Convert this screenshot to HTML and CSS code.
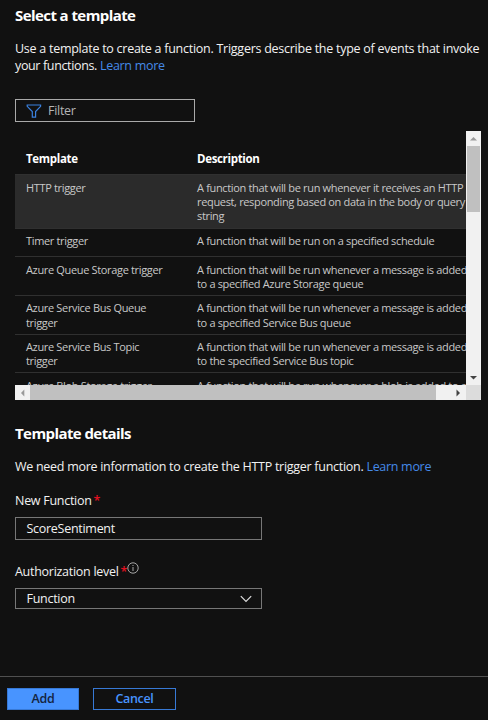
FILE: index.html
```html
<!DOCTYPE html>
<html lang="en">
<head>
<meta charset="utf-8">
<title>New function</title>
<link rel="stylesheet" href="styles.css">
</head>
<body>
<main class="panel">
  <h2 class="heading"><span>Select a template</span></h2>
  <p class="intro">Use a template to create a function. Triggers describe the type of events that invoke<br><span class="tight">your functions.</span> <a class="link">Learn more</a></p>
  <div class="filter">
    <svg class="funnel" viewBox="0 0 16 14" width="16" height="14"><path d="M1.200 1h13.400v1.300L9.600 7.600v5.500H6.300V7.600L1.200 2.300z"/></svg>
    <span>Filter</span>
  </div>
  <section class="grid-box">
    <div class="viewport">
      <div class="row head"><span>Template</span><span>Description</span></div>
      <div class="row tall selected"><span>HTTP trigger</span><span>A function that will be run whenever it receives an HTTP<br>request, responding based on data in the body or query<br>string</span></div>
      <div class="row short"><span>Timer trigger</span><span>A function that will be run on a specified schedule</span></div>
      <div class="row"><span>Azure Queue Storage trigger</span><span>A function that will be run whenever a message is added<br>to a specified Azure Storage queue</span></div>
      <div class="row"><span>Azure Service Bus Queue<br>trigger</span><span>A function that will be run whenever a message is added<br>to a specified Service Bus queue</span></div>
      <div class="row"><span>Azure Service Bus Topic<br>trigger</span><span>A function that will be run whenever a message is added<br>to the specified Service Bus topic</span></div>
      <div class="row"><span>Azure Blob Storage trigger</span><span>A function that will be run whenever a blob is added to a</span></div>
    </div>
    <div class="vbar">
      <svg class="arrow dim" viewBox="0 0 15 15"><path d="M4 9.500h7L7.500 6z"/></svg>
      <div class="vthumb"></div>
      <svg class="arrow" viewBox="0 0 15 15"><path d="M4 6h7L7.500 9.500z"/></svg>
    </div>
    <div class="hbar">
      <svg class="arrow dim" viewBox="0 0 15 15"><path d="M9.300 4.500v7L6 8z"/></svg>
      <div class="hthumb"></div>
      <svg class="arrow" viewBox="0 0 15 15"><path d="M5.500 4.500v7L9 8z"/></svg>
    </div>
    <div class="corner"></div>
  </section>
  <h2 class="heading details"><span>Template details</span></h2>
  <p class="info">We need more information to create the HTTP trigger function. <a class="link">Learn more</a></p>
  <div class="label"><span>New Function</span><b class="req">*</b></div>
  <div class="field"><span>ScoreSentiment</span></div>
  <div class="label auth"><span>Authorization level</span><b class="req">*</b>
    <svg class="infoicon" viewBox="0 0 12 12" width="12" height="12"><circle cx="6" cy="6" r="5.200"/><path d="M6 5v4M6 3v1"/></svg>
  </div>
  <div class="field select"><span>Function</span>
    <svg class="chevron" viewBox="0 0 12 8" width="12" height="8"><path d="M.8 1.200 6 6.500l5.200-5.300"/></svg>
  </div>
</main>
<footer class="footer">
  <button class="btn primary">Add</button>
  <button class="btn outline">Cancel</button>
</footer>
</body>
</html>
```
FILE: styles.css
```css
* { box-sizing: border-box; }
body {
  margin: 0;
  width: 488px;
  height: 720px;
  overflow: hidden;
  display: flex;
  flex-direction: column;
  background: #111;
  color: #f2f2f2;
  font: 12.500px/17px "Open Sans", "Noto Sans", sans-serif;
  letter-spacing: -0.280px;
  white-space: nowrap;
}
.panel { height: 676px; padding: 4px 7px 0 15px; }
.heading { margin: 0; font-size: 15px; font-weight: 700; line-height: 22px; letter-spacing: -0.580px; color: #fff; }
.intro { margin: 14px 0 0; height: 34px; letter-spacing: -0.260px; }
.tight { letter-spacing: -0.360px; }
.link { color: #458ae8; letter-spacing: -0.300px; }
.filter {
  display: flex;
  align-items: center;
  gap: 6px;
  width: 180px;
  height: 23px;
  margin-top: 25px;
  padding-left: 10px;
  border: 1px solid #aaa;
  color: #b4b4b4;
}
.funnel { fill: none; stroke: #3b82e0; stroke-width: 1.200; }
.grid-box {
  display: grid;
  grid-template-columns: 451px 15px;
  grid-template-rows: 254px 15px;
  width: 466px;
  margin-top: 9px;
}
.viewport { overflow: hidden; font-size: 11px; line-height: 14.400px; letter-spacing: -0.340px; color: #c8c8c8; }
.row {
  display: grid;
  grid-template-columns: 171px 1fr;
  height: 38.700px;
  padding: 5.500px 0 0 11px;
  border-bottom: 1px solid #303030;
}
.head { height: 44px; padding-top: 21px; font-size: 11.500px; font-weight: 700; letter-spacing: -0.330px; color: #fff; }
.tall { height: 53.600px; }
.short { height: 28.600px; }
.selected { background: #2b2b2b; }
.vbar, .hbar { display: flex; background: #f1f1f1; justify-content: space-between; }
.vbar { flex-direction: column; }
.arrow { flex: none; width: 15px; height: 15px; fill: #444; }
.dim { fill: #999; }
.vthumb { height: 66px; margin: 0 1px auto; background: #c0c0c0; }
.hthumb { width: 406px; margin-right: auto; background: #c0c0c0; }
.corner { background: #dcdcdc; }
.details { margin-top: 22px; }
.info { margin: 14px 0 0; }
.label { display: flex; height: 17px; margin-top: 17px; }
.req { margin-left: 2px; color: #e01020; font-weight: 600; }
.field {
  display: flex;
  align-items: center;
  justify-content: space-between;
  width: 247px;
  height: 23px;
  margin-top: 8px;
  padding: 0 9px 0 10.500px;
  border: 1px solid #777;
}
.auth { margin-top: 23px; }
.infoicon { margin: -1px 0 0 0; fill: none; stroke: #ccc; stroke-width: 0.800; }
.select { height: 21px; }
.chevron { fill: none; stroke: #ddd; stroke-width: 1.200; }
.footer { display: flex; gap: 14px; height: 44px; padding: 11px 7px 0; border-top: 1px solid #505050; }
.btn {
  height: 22px;
  padding: 0;
  border: 1px solid #3779d6;
  font: 600 12.500px/18px "Open Sans", "Noto Sans", sans-serif;
  letter-spacing: -0.350px;
}
.primary { width: 72px; background: #4894ff; color: #142440; }
.outline { width: 83px; background: #111; color: #4894ff; }
```
